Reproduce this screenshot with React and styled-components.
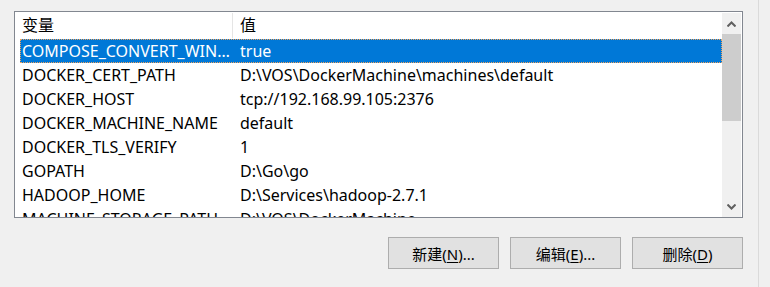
import React from 'react'
import styled, { createGlobalStyle } from 'styled-components'

const GlobalStyle = createGlobalStyle`
  html, body {
    margin: 0;
    padding: 0;
    background: #f0f0f0;
  }
  body {
    font-family: "Noto Sans", "Noto Sans CJK SC", sans-serif;
    font-size: 16px;
    color: #000;
  }
`

const vars = [
  { name: 'COMPOSE_CONVERT_WINDOWS_PATHS', value: 'true' },
  { name: 'DOCKER_CERT_PATH', value: 'D:\\VOS\\DockerMachine\\machines\\default' },
  { name: 'DOCKER_HOST', value: 'tcp://192.168.99.105:2376' },
  { name: 'DOCKER_MACHINE_NAME', value: 'default' },
  { name: 'DOCKER_TLS_VERIFY', value: '1' },
  { name: 'GOPATH', value: 'D:\\Go\\go' },
  { name: 'HADOOP_HOME', value: 'D:\\Services\\hadoop-2.7.1' },
  { name: 'MACHINE_STORAGE_PATH', value: 'D:\\VOS\\DockerMachine' },
]

const Arrow = ({ down }) => (
  <svg width="9" height="6" viewBox="0 0 9 6">
    <path
      d={down ? 'M0.5 0.5 L4.5 4.5 L8.5 0.5' : 'M0.5 5.5 L4.5 1.5 L8.5 5.5'}
      fill="none"
      stroke="#606060"
      strokeWidth="2"
    />
  </svg>
)

const App = () => {
  return (
    <>
      <GlobalStyle />
      <StPage>
        <StMain>
          <StList>
            <StContent>
              <StHeader>
                <StHeadCell $w={218}>变量</StHeadCell>
                <StHeadCell>值</StHeadCell>
              </StHeader>
              <StRows>
                {vars.map((v, i) => (
                  <StRow key={v.name} $selected={i === 0}>
                    <StNameCell>{v.name}</StNameCell>
                    <StValueCell>{v.value}</StValueCell>
                  </StRow>
                ))}
              </StRows>
            </StContent>
            <StScrollbar>
              <StArrowBtn><Arrow /></StArrowBtn>
              <StThumb />
              <StTrack />
              <StArrowBtn><Arrow down /></StArrowBtn>
            </StScrollbar>
          </StList>
          <StButtons>
            <StButton type="button">新建(<u>N</u>)...</StButton>
            <StButton type="button">编辑(<u>E</u>)...</StButton>
            <StButton type="button">删除(<u>D</u>)</StButton>
          </StButtons>
        </StMain>
        <StEdge />
      </StPage>
    </>
  )
}

export default App

const StPage = styled.div`
  display: flex;
  width: 770px;
  height: 287px;
  overflow: hidden;
`

const StMain = styled.div`
  width: 729px;
  padding: 11px 0 0 14px;
  display: flex;
  flex-direction: column;
`

const StEdge = styled.div`
  margin-left: 15px;
  width: 1px;
  height: 100%;
  background: #dadada;
`

const StList = styled.div`
  height: 207px;
  border: 1px solid #828790;
  background: #fff;
  display: flex;
  box-sizing: border-box;
  overflow: hidden;
`

const StContent = styled.div`
  flex: 1;
  overflow: hidden;
`

const StHeader = styled.div`
  display: flex;
  height: 27px;
`

const StHeadCell = styled.div`
  ${(p) => (p.$w ? `width: ${p.$w}px;` : 'flex: 1;')}
  padding-left: 7px;
  box-sizing: border-box;
  border-right: ${(p) => (p.$w ? '1px solid #e5e5e5' : 'none')};
  margin: 1px 0;
  line-height: 25px;
`

const StRows = styled.div`
  padding-left: 5px;
`

const StRow = styled.div`
  display: flex;
  height: 24px;
  align-items: center;
  white-space: nowrap;
  color: ${(p) => (p.$selected ? '#fff' : '#000')};
  background: ${(p) => (p.$selected ? '#0078d7' : 'transparent')};
  outline: ${(p) => (p.$selected ? '1px dotted #f2a35c' : 'none')};
  outline-offset: -1px;
`

const StNameCell = styled.div`
  width: 212px;
  padding: 0 0 0 2px;
  box-sizing: border-box;
  overflow: hidden;
  text-overflow: ellipsis;
`

const StValueCell = styled.div`
  flex: 1;
  padding-left: 8px;
  overflow: hidden;
`

const StScrollbar = styled.div`
  width: 19px;
  margin: 1px 1px 0 0;
  background: #f0f0f0;
  display: flex;
  flex-direction: column;
`

const StArrowBtn = styled.div`
  height: 21px;
  display: flex;
  align-items: center;
  justify-content: center;
`

const StThumb = styled.div`
  height: 87px;
  background: #cdcdcd;
`

const StTrack = styled.div`
  flex: 1;
`

const StButtons = styled.div`
  display: flex;
  justify-content: flex-end;
  gap: 11px;
  margin-top: 19px;
`

const StButton = styled.button`
  width: 111px;
  height: 32px;
  background: #e1e1e1;
  border: 1px solid #adadad;
  font-family: "Noto Sans", "Noto Sans CJK SC", sans-serif;
  font-size: 15px;
  color: #000;
  padding: 0;
  cursor: pointer;

  u {
    text-decoration: underline;
    text-underline-offset: 2px;
  }
`
